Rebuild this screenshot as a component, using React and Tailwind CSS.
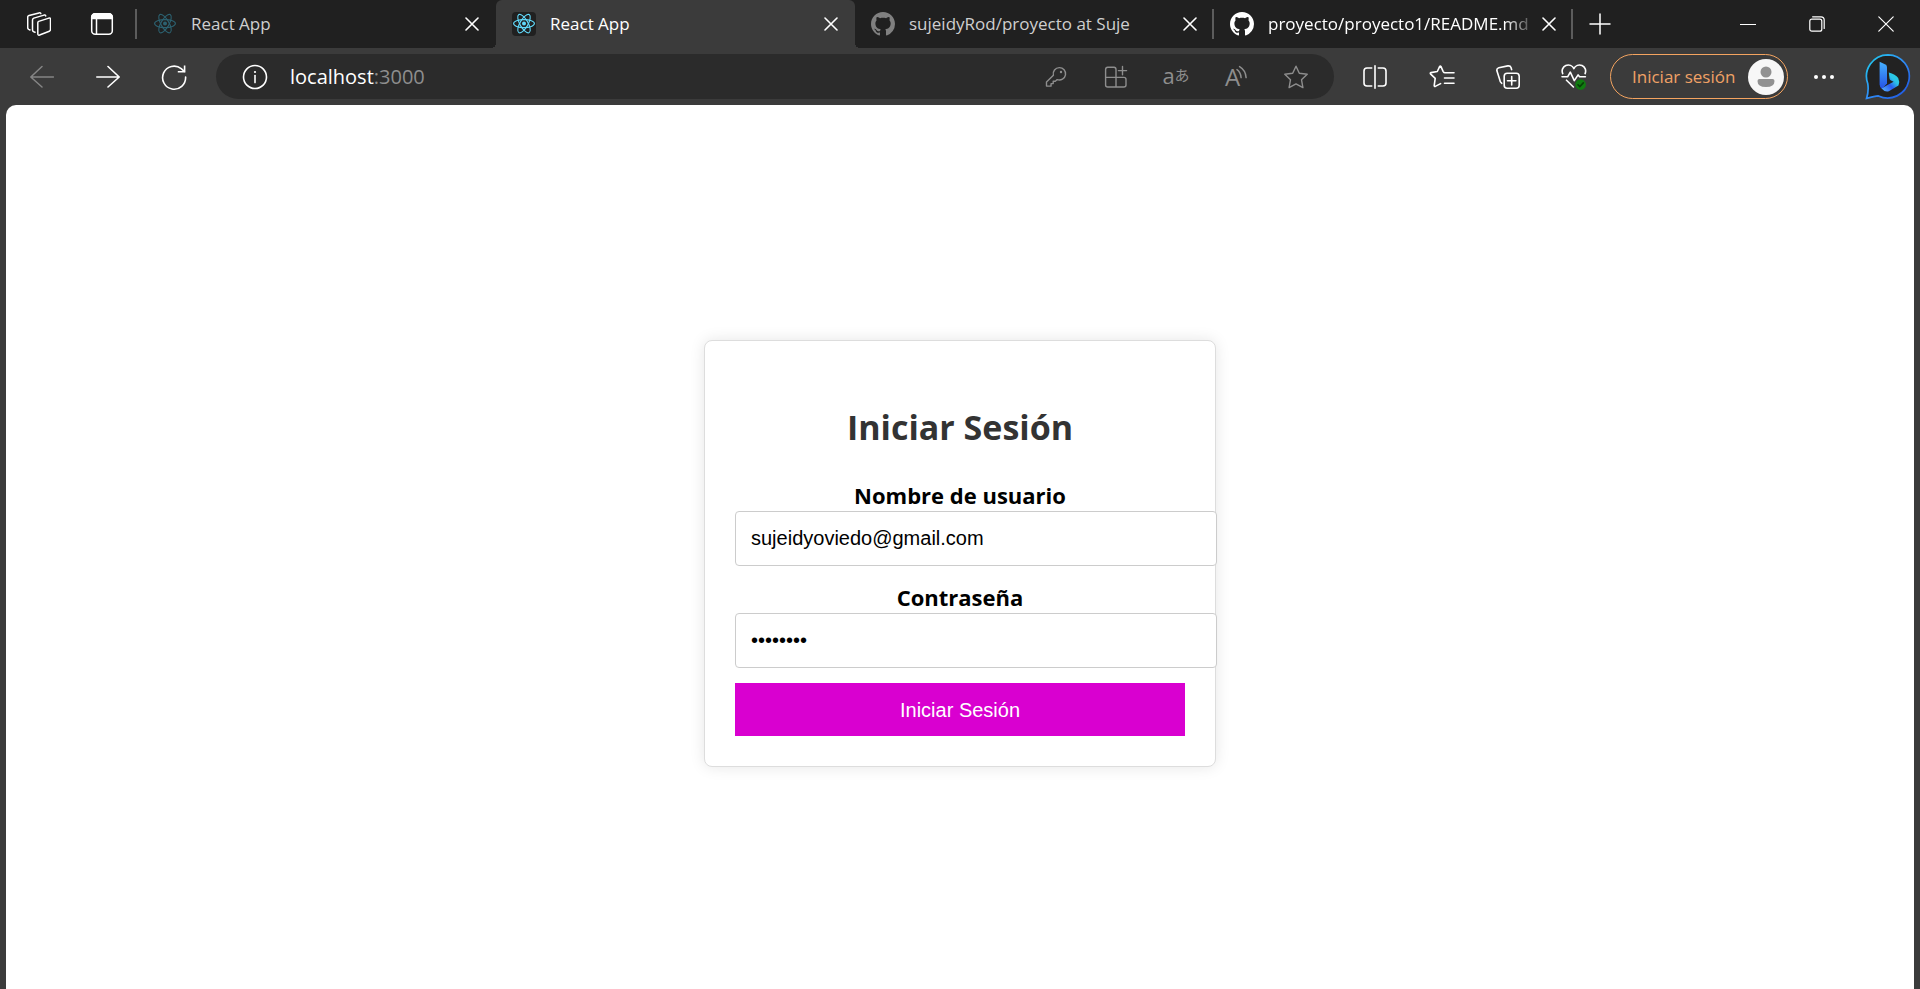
import React from "react";

function Icon({ size = 24, className = "", children, strokeWidth = 1.5 }) {
  return (
    <svg
      width={size}
      height={size}
      viewBox={`0 0 ${size} ${size}`}
      fill="none"
      stroke="currentColor"
      strokeWidth={strokeWidth}
      strokeLinecap="round"
      strokeLinejoin="round"
      className={`shrink-0 ${className}`}
      aria-hidden="true"
    >
      {children}
    </svg>
  );
}

function ReactLogo({ className }) {
  return (
    <Icon className={className} strokeWidth={1.1}>
      <circle cx="12" cy="11.6" r="2" fill="currentColor" stroke="none" />
      <ellipse cx="12" cy="11.6" rx="10.4" ry="4" />
      <ellipse cx="12" cy="11.6" rx="10.4" ry="4" transform="rotate(60 12 11.6)" />
      <ellipse cx="12" cy="11.6" rx="10.4" ry="4" transform="rotate(120 12 11.6)" />
    </Icon>
  );
}

function GitHubLogo({ className }) {
  return (
    <svg width="24" height="24" viewBox="0 0 16 16" fill="currentColor" className={`shrink-0 ${className}`} aria-hidden="true">
      <path d="M8 0C3.58 0 0 3.58 0 8c0 3.54 2.29 6.53 5.47 7.59.4.07.55-.17.55-.38 0-.19-.01-.82-.01-1.49-2.01.37-2.53-.49-2.69-.94-.09-.23-.48-.94-.82-1.13-.28-.15-.68-.52-.01-.53.63-.01 1.08.58 1.23.82.72 1.21 1.87.87 2.33.66.07-.52.28-.87.51-1.07-1.78-.2-3.64-.89-3.64-3.95 0-.87.31-1.59.82-2.15-.08-.2-.36-1.02.08-2.12 0 0 .67-.21 2.2.82.64-.18 1.32-.27 2-.27.68 0 1.36.09 2 .27 1.53-1.04 2.2-.82 2.2-.82.44 1.1.16 1.92.08 2.12.51.56.82 1.27.82 2.15 0 3.07-1.87 3.75-3.65 3.95.29.25.54.73.54 1.48 0 1.07-.01 1.93-.01 2.2 0 .21.15.46.55.38A8.013 8.013 0 0016 8c0-4.42-3.58-8-8-8z" />
    </svg>
  );
}

function WorkspacesIcon() {
  return (
    <Icon>
      <path d="M11.7 9.4 21.9 6.1Q23.5 5.7 23.5 7.3V17.2Q23.5 18.7 22.3 19.2L12.6 23Q10.8 23.6 10.8 21.8V10.8Q10.8 9.8 11.7 9.4Z" />
      <path d="M8 20.2 6.8 19.8Q5.5 19.3 5.5 17.9V8Q5.5 6.6 6.8 6.1L17 3.1Q18.7 2.7 18.7 3.9" />
      <path d="M3 18 1.7 17.4Q.7 16.8.7 15.6V5.2Q.7 3.8 2 3.4L12 .9Q13.7.6 13.8 1.6" />
    </Icon>
  );
}

function TabActionsIcon() {
  return (
    <Icon>
      <rect x="1.7" y="1.7" width="20.6" height="20.6" rx="3.5" />
      <path d="M1.7 6.500V5A3.300 3.300 0 0 1 5 1.700h14A3.300 3.300 0 0 1 22.300 5v1.500Z" fill="currentColor" />
      <path d="M6.5 7v15" />
    </Icon>
  );
}

function BackIcon() {
  return (
    <Icon>
      <path d="M23.5 12H.8M12 1.5.8 12 12 22" />
    </Icon>
  );
}

function ForwardIcon() {
  return (
    <Icon strokeWidth={1.6}>
      <path d="M.8 12h22.4M12 1.5 23.2 12 12 22" />
    </Icon>
  );
}

function ReloadIcon() {
  return (
    <Icon size={26} strokeWidth={1.6}>
      <path d="M24.6 13A11.5 11.5 0 1 1 20.2 4.600L23.300 7.400" />
      <path d="M23.6 1.4v6.3h-6.800" strokeLinecap="butt" strokeLinejoin="miter" />
    </Icon>
  );
}

function InfoIcon() {
  return (
    <Icon size={26} strokeWidth={1.6}>
      <circle cx="13" cy="13" r="11.5" />
      <path d="M13 11.6v7" />
      <circle cx="13" cy="8" r="1.1" fill="currentColor" stroke="none" />
    </Icon>
  );
}

function KeyIcon() {
  return (
    <Icon size={22} strokeWidth={1.4}>
      <path d="M14.3 1.6a6.2 6.2 0 1 1-2.1 12l-1.9 1.700H8.200v2.300H6.100L6 20.100H1.500v-4L8.400 9.300a6.200 6.200 0 0 1 5.900-7.700Z" />
      <circle cx="16" cy="6" r="1.2" fill="currentColor" stroke="none" />
    </Icon>
  );
}

function AppsIcon() {
  return (
    <Icon strokeWidth={1.4}>
      <path d="M12 12.4V4.4Q12 2.2 10 2.2H3.7Q1.6 2.2 1.6 4.4V20Q1.6 22 3.7 22H19.8Q22 22 22 20V14.5Q22 12.4 19.8 12.4H1.6M12 12.4V22M18.5 1.5v8.2M14.4 5.6h8.2" />
    </Icon>
  );
}

function ReadAloudIcon() {
  return (
    <>
      <span className="text-[24px] leading-6">A</span>
      <svg
        width="11"
        height="24"
        viewBox="0 0 11 24"
        fill="none"
        stroke="currentColor"
        strokeWidth="1.5"
        strokeLinecap="round"
        className="-ml-1"
        aria-hidden="true"
      >
        <path d="M1 4.600Q4.600 7 5.100 12.600M3.600 1.600Q9.600 5.200 10.100 12.600" />
      </svg>
    </>
  );
}

function StarIcon() {
  return (
    <Icon strokeWidth={1.4}>
      <path d="M12 1.200 15.300 8.300 23.200 9.300 17.500 14.700 18.900 22.600 12 18.900 5.100 22.600 6.500 14.700 .8 9.300 8.700 8.300Z" />
    </Icon>
  );
}

function SplitIcon() {
  return (
    <Icon strokeWidth={1.6}>
      <path d="M8.7 3H4Q1 3 1 6v12Q1 21 4 21h4.7M15.3 3H20Q23 3 23 6v12Q23 21 20 21h-4.7M12 .8v22.4" />
    </Icon>
  );
}

function FavoritesIcon() {
  return (
    <Icon size={26} strokeWidth={1.6}>
      <path d="M25 8.700H16Q14.800 8.700 14.200 7.600L11.900 2.400Q11.300 1.500 10.700 2.400L8.300 7.500 2 8.600Q.7 9 1.700 10.100L6.200 14.400 5.200 21.600Q5.200 22.800 6.300 22.400L11.600 19.600M15.500 14H25M15.500 19.300H25" />
    </Icon>
  );
}

function CollectionsIcon() {
  return (
    <Icon strokeWidth={1.6}>
      <rect x="8.2" y="8.2" width="15" height="15" rx="3" />
      <path d="M15.700 11.500v8.400M11.500 15.700h8.400M5.700 18.300 4.600 17Q4.200 16.500 4 15.600L.9 5.800Q.4 3.400 2.800 2.700L11.800 .9Q14.300.5 15 2.600L15.600 4.600" />
    </Icon>
  );
}

function HealthIcon() {
  return (
    <Icon size={26} strokeWidth={1.6}>
      <path d="M1.700 9.600A6 6 0 0 1 12.900 4.600 6 6 0 0 1 24.100 9.600M1 12.800h5.600l2.700-4.600 4 8.400 3.800-5.700 1.500 1.900h5.800M5.500 16.200 12.400 23" />
      <circle cx="19.6" cy="20.6" r="5.3" fill="#107c10" stroke="none" />
      <path d="m17 20.8 1.800 1.800 3.500-3.700" stroke="#063f06" />
    </Icon>
  );
}

function BingIcon() {
  return (
    <svg width="48" height="48" viewBox="0 0 48 48" fill="none" aria-hidden="true">
      <defs>
        <linearGradient id="bubble" x1="0" y1="0" x2="1" y2="1">
          <stop offset="0" stopColor="#1fd0ee" />
          <stop offset=".5" stopColor="#2f8df5" />
          <stop offset="1" stopColor="#1d4fe0" />
        </linearGradient>
        <linearGradient id="stem" x1="0" y1="0" x2="0" y2="1">
          <stop offset="0" stopColor="#45b1ff" />
          <stop offset="1" stopColor="#2450e6" />
        </linearGradient>
        <linearGradient id="lobe" x1="1" y1="0" x2="0" y2="1">
          <stop offset="0" stopColor="#27d3dc" />
          <stop offset=".35" stopColor="#2cc3e8" />
          <stop offset=".6" stopColor="#2a5cf0" />
          <stop offset="1" stopColor="#5bb8ff" />
        </linearGradient>
      </defs>
      <path
        d="M24 2.800A21.600 21.600 0 1 1 14.400 43.900Q11 44.300 2.600 46.300 4.900 39 3.800 31.800A21.600 21.600 0 0 1 24 2.800Z"
        fill="#222"
        stroke="url(#bubble)"
        strokeWidth="1.7"
      />
      <path d="M15.600 9.800 21.400 12.400Q23 13.200 23 15.200V31.500L18 37Q15.600 35.500 15.600 32.300Z" fill="url(#stem)" />
      <path d="M24.800 20.600Q31.500 22.500 34.200 26 36 29.500 34.500 33.500L24.800 39.300Q20.500 40.300 17.600 36.600L23 33.300 29.600 29.800 27 28.600Q25.800 28 25.500 26.600Z" fill="url(#lobe)" />
    </svg>
  );
}

function TabClose({ label }) {
  return (
    <button type="button" aria-label={label} className="flex size-6 shrink-0 items-center justify-center text-white">
      <Icon size={14} strokeWidth={1.6}>
        <path d="M1 1 13 13M13 1 1 13" />
      </Icon>
    </button>
  );
}

function Tab({ icon, title, active = false, bright, divider }) {
  return (
    <div
      role="tab"
      aria-selected={active}
      className={`flex h-12 w-[359px] min-w-0 items-center pl-4 pr-3 ${
        active
          ? "relative rounded-t-md bg-[#3b3b3b] before:absolute before:bottom-0 before:-left-[5px] before:size-[5px] before:bg-[radial-gradient(circle_at_top_left,transparent_5px,#3b3b3b_5px)] after:absolute after:bottom-0 after:-right-[5px] after:size-[5px] after:bg-[radial-gradient(circle_at_top_right,transparent_5px,#3b3b3b_5px)]"
          : ""
      }`}
    >
      {icon}
      <span
        className={`ml-[14px] flex-1 overflow-hidden whitespace-nowrap text-[17px] leading-6 ${
          active || bright ? "text-white" : "text-[#cfcfcf]"
        } ${bright ? "[mask-image:linear-gradient(to_right,black_88%,transparent)]" : ""}`}
      >
        {title}
      </span>
      <TabClose label={`Cerrar ${title}`} />
      {divider && <span className="-mr-3 ml-[10px] h-[30px] w-[2px] bg-[#5c5c5c]" />}
    </div>
  );
}

function TabStrip() {
  return (
    <div className="flex h-12 items-center bg-[#202020] text-white">
      <button type="button" aria-label="Áreas de trabajo" className="ml-[27px]">
        <WorkspacesIcon />
      </button>
      <button type="button" aria-label="Acciones de pestañas" className="ml-[39px]">
        <TabActionsIcon />
      </button>
      <span className="ml-[21px] h-[30px] w-[2px] shrink-0 bg-[#5c5c5c]" />
      <div role="tablist" className="flex min-w-0">
        <Tab icon={<ReactLogo className="text-[#2c6170]" />} title="React App" />
        <Tab
          active
          icon={
            <span className="shrink-0 rounded-sm bg-[#202020]">
              <ReactLogo className="text-[#61dafb]" />
            </span>
          }
          title="React App"
        />
        <Tab icon={<GitHubLogo className="text-[#808080]" />} title="sujeidyRod/proyecto at Suje" divider />
        <Tab bright icon={<GitHubLogo className="text-white" />} title="proyecto/proyecto1/README.md" divider />
      </div>
      <button type="button" aria-label="Nueva pestaña" className="ml-4">
        <Icon size={22} strokeWidth={1.5}>
          <path d="M11 1v20M1 11h20" />
        </Icon>
      </button>
      <div className="ml-auto flex h-full">
        <button type="button" aria-label="Minimizar" className="flex w-[69px] items-center justify-center">
          <Icon size={16} strokeWidth={1.2}>
            <path d="M.5 8.5h15" />
          </Icon>
        </button>
        <button type="button" aria-label="Restaurar" className="flex w-[69px] items-center justify-center">
          <Icon size={16} strokeWidth={1.2}>
            <rect x=".8" y="3.2" width="12" height="12" rx="2" />
            <path d="M3.6.8H12q3.2 0 3.2 3.2v8.4" />
          </Icon>
        </button>
        <button type="button" aria-label="Cerrar ventana" className="flex w-[69px] items-center justify-center">
          <Icon size={16} strokeWidth={1.2}>
            <path d="M.8.8 15.2 15.2M15.2.8.8 15.2" />
          </Icon>
        </button>
      </div>
    </div>
  );
}

function ToolButton({ label, className, children }) {
  return (
    <button type="button" aria-label={label} className={`flex h-10 shrink-0 items-center justify-center ${className}`}>
      {children}
    </button>
  );
}

function Toolbar() {
  return (
    <div className="flex h-[57px] items-center pl-[9px] pr-2 text-white">
      <ToolButton label="Atrás" className="w-[66px] text-[#858585]">
        <BackIcon />
      </ToolButton>
      <ToolButton label="Adelante" className="w-[66px]">
        <ForwardIcon />
      </ToolButton>
      <ToolButton label="Actualizar" className="w-[66px]">
        <ReloadIcon />
      </ToolButton>
      <div className="ml-[9px] flex h-[45px] min-w-0 flex-1 items-center rounded-full bg-[#2b2b2b] pl-[26px] pr-2">
        <ToolButton label="Información del sitio" className="">
          <InfoIcon />
        </ToolButton>
        <div role="textbox" tabIndex={0} aria-label="Dirección" className="ml-2 flex-1 pl-[14px] text-[20px] leading-6">
          localhost<span className="text-[#8e8e8e]">:3000</span>
        </div>
        <div className="flex text-[#8e8e8e]">
          <ToolButton label="Contraseñas" className="w-[60px]">
            <KeyIcon />
          </ToolButton>
          <ToolButton label="Instalar aplicación" className="w-[60px]">
            <AppsIcon />
          </ToolButton>
          <ToolButton label="Traducir" className="w-[60px] pb-1">
            <span className="text-[22px] leading-6">a</span>
            <span className="font-['Noto_Sans_CJK_JP',sans-serif] text-[15px] leading-6">あ</span>
          </ToolButton>
          <ToolButton label="Leer en voz alta" className="w-[60px]">
            <ReadAloudIcon />
          </ToolButton>
          <ToolButton label="Agregar a favoritos" className="w-[60px]">
            <StarIcon />
          </ToolButton>
        </div>
      </div>
      <div className="ml-2 flex">
        <ToolButton label="Pantalla dividida" className="w-[66px]">
          <SplitIcon />
        </ToolButton>
        <ToolButton label="Favoritos" className="w-[67px]">
          <FavoritesIcon />
        </ToolButton>
        <ToolButton label="Colecciones" className="w-[66px]">
          <CollectionsIcon />
        </ToolButton>
        <ToolButton label="Rendimiento" className="w-[66px]">
          <HealthIcon />
        </ToolButton>
      </div>
      <button
        type="button"
        className="ml-[3px] flex h-[45px] w-[178px] shrink-0 items-center justify-between rounded-full border border-[#f4a460] pl-[21px] pr-[3px] text-[17px] leading-6 text-[#f0a266]"
      >
        Iniciar sesión
        <svg width="36" height="36" viewBox="0 0 36 36" aria-hidden="true">
          <circle cx="18" cy="18" r="18" fill="#f7f7f7" />
          <circle cx="18" cy="13" r="5.5" fill="#919191" />
          <path d="M11.5 20h13q2 0 2 2 0 6-8.500 6t-8.500-6q0-2 2-2Z" fill="#919191" />
        </svg>
      </button>
      <ToolButton label="Configuración y más" className="ml-2 w-14">
        <Icon size={22}>
          <g fill="currentColor" stroke="none">
            <circle cx="3" cy="11" r="2" />
            <circle cx="11" cy="11" r="2" />
            <circle cx="19" cy="11" r="2" />
          </g>
        </Icon>
      </ToolButton>
      <ToolButton label="Bing" className="ml-[12px] pb-[2px]">
        <BingIcon />
      </ToolButton>
    </div>
  );
}

function Field({ id, label, type, defaultValue }) {
  return (
    <div className="mb-[15px]">
      <label htmlFor={id} className="block text-center text-[22px] font-bold leading-8 text-black">
        {label}
      </label>
      <input
        id={id}
        type={type}
        defaultValue={defaultValue}
        className="block h-[55px] w-[calc(100%+32px)] rounded border border-[#ccc] bg-white px-[15px] font-['Liberation_Sans',Arial,sans-serif] text-[20px] text-black outline-none"
      />
    </div>
  );
}

function LoginForm() {
  return (
    <form
      onSubmit={(event) => event.preventDefault()}
      className="w-full max-w-[512px] rounded-lg border border-[#ddd] bg-white p-[30px] pt-[62px] shadow-[0_0_15px_rgba(0,0,0,0.1)]"
    >
      <h2 className="mb-7 text-center text-[34px] font-bold leading-[48px] text-[#333]">Iniciar Sesión</h2>
      <Field id="username" label="Nombre de usuario" type="text" defaultValue="sujeidyoviedo@gmail.com" />
      <Field id="password" label="Contraseña" type="password" defaultValue="password" />
      <button
        type="submit"
        className="block h-[53px] w-full bg-[#d900d0] font-['Liberation_Sans',Arial,sans-serif] text-[20px] text-white"
      >
        Iniciar Sesión
      </button>
    </form>
  );
}

export default function App() {
  return (
    <div className="flex min-h-screen flex-col bg-[#3b3b3b] font-['Open_Sans','Noto_Sans_CJK_JP',sans-serif]">
      <header>
        <TabStrip />
        <Toolbar />
      </header>
      <main className="mx-[6px] flex flex-1 items-center justify-center rounded-t-[10px] bg-white pt-[13px]">
        <LoginForm />
      </main>
    </div>
  );
}
